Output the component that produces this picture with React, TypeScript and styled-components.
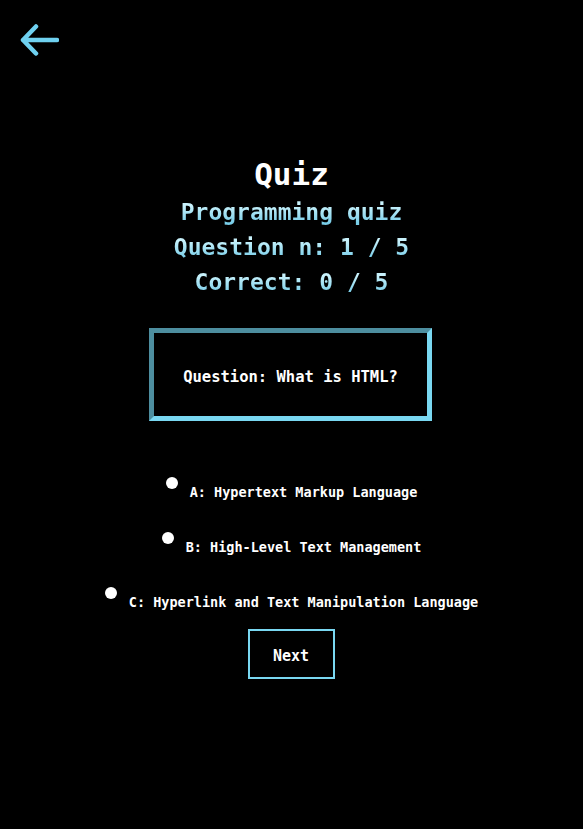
import React, { useState } from "react";
import styled, { createGlobalStyle } from "styled-components";

const GlobalStyle = createGlobalStyle`
  html, body {
    margin: 0;
    padding: 0;
    background: #000;
  }
  body {
    font-family: "DejaVu Sans Mono", "Liberation Mono", monospace;
    color: #fff;
  }
`;

const options = [
  { key: "A", label: "Hypertext Markup Language" },
  { key: "B", label: "High-Level Text Management" },
  { key: "C", label: "Hyperlink and Text Manipulation Language" },
];

const BackArrow = () => (
  <svg width="40" height="34" viewBox="0 0 40 34" fill="none">
    <path
      d="M38 17H4M17 3.5L4 17l13 13.5"
      stroke="#6fd1f0"
      strokeWidth="4.5"
      strokeLinecap="round"
      strokeLinejoin="round"
    />
  </svg>
);

export default function App() {
  const [answer, setAnswer] = useState<string | null>(null);

  return (
    <Page>
      <GlobalStyle />
      <BackBar>
        <BackButton aria-label="back">
          <BackArrow />
        </BackButton>
      </BackBar>

      <Title>Quiz</Title>
      <SubTitles>
        <SubLine>Programming quiz</SubLine>
        <SubLine>Question n: 1 / 5</SubLine>
        <SubLine>Correct: 0 / 5</SubLine>
      </SubTitles>

      <QuestionBox>Question: What is HTML?</QuestionBox>

      <OptionList>
        {options.map((op) => (
          <Option key={op.key}>
            <Radio
              type="radio"
              name="answer"
              checked={answer === op.key}
              onChange={() => setAnswer(op.key)}
            />
            <OptionText>
              {op.key}: {op.label}
            </OptionText>
          </Option>
        ))}
      </OptionList>

      <NextButton>Next</NextButton>
    </Page>
  );
}

const Page = styled.div`
  min-height: 829px;
  display: flex;
  flex-direction: column;
  align-items: center;
  background: #000;
`;

const BackBar = styled.div`
  align-self: stretch;
  padding: 23px 0 0 19px;
  height: 34px;
`;

const BackButton = styled.button`
  display: block;
  padding: 0;
  border: none;
  background: none;
  cursor: pointer;
  svg {
    display: block;
  }
`;

const Title = styled.h1`
  margin: 99px 0 0;
  font-size: 31px;
  line-height: 36px;
  font-weight: bold;
  color: #fff;
`;

const SubTitles = styled.div`
  margin-top: 3px;
  display: flex;
  flex-direction: column;
  align-items: center;
`;

const SubLine = styled.div`
  font-size: 23px;
  line-height: 35px;
  font-weight: bold;
  background: linear-gradient(180deg, #c8f2fc 30%, #78cde8 80%);
  -webkit-background-clip: text;
  background-clip: text;
  color: transparent;
`;

const QuestionBox = styled.div`
  margin-top: 28px;
  margin-left: -2px;
  width: 283px;
  height: 93px;
  box-sizing: border-box;
  padding-top: 5px;
  border: 5px solid;
  border-color: #4d8e9f #79d7f1 #79d7f1 #4d8e9f;
  display: flex;
  align-items: center;
  justify-content: center;
  font-size: 15.5px;
  font-weight: bold;
  color: #fff;
`;

const OptionList = styled.div`
  margin-top: 56px;
  display: flex;
  flex-direction: column;
  align-items: center;
  gap: 30px;
`;

const Option = styled.label`
  display: flex;
  align-items: flex-start;
  gap: 12px;
  cursor: pointer;
`;

const Radio = styled.input`
  appearance: none;
  margin: 0;
  width: 12px;
  height: 12px;
  border-radius: 50%;
  background: #fff;
  cursor: pointer;
  &:checked {
    box-shadow: inset 0 0 0 3px #fff, inset 0 0 0 6px #1a73e8;
  }
`;

const OptionText = styled.span`
  margin-top: 5px;
  font-size: 13.5px;
  line-height: 20px;
  font-weight: bold;
  color: #fff;
  white-space: nowrap;
`;

const NextButton = styled.button`
  margin-top: 17px;
  margin-left: -1px;
  width: 87px;
  height: 50px;
  box-sizing: border-box;
  padding: 4px 0 0;
  border: 2.5px solid #79d7f1;
  background: #000;
  color: #fff;
  font-family: "DejaVu Sans Mono", "Liberation Mono", monospace;
  font-size: 15px;
  font-weight: bold;
  cursor: pointer;
`;
